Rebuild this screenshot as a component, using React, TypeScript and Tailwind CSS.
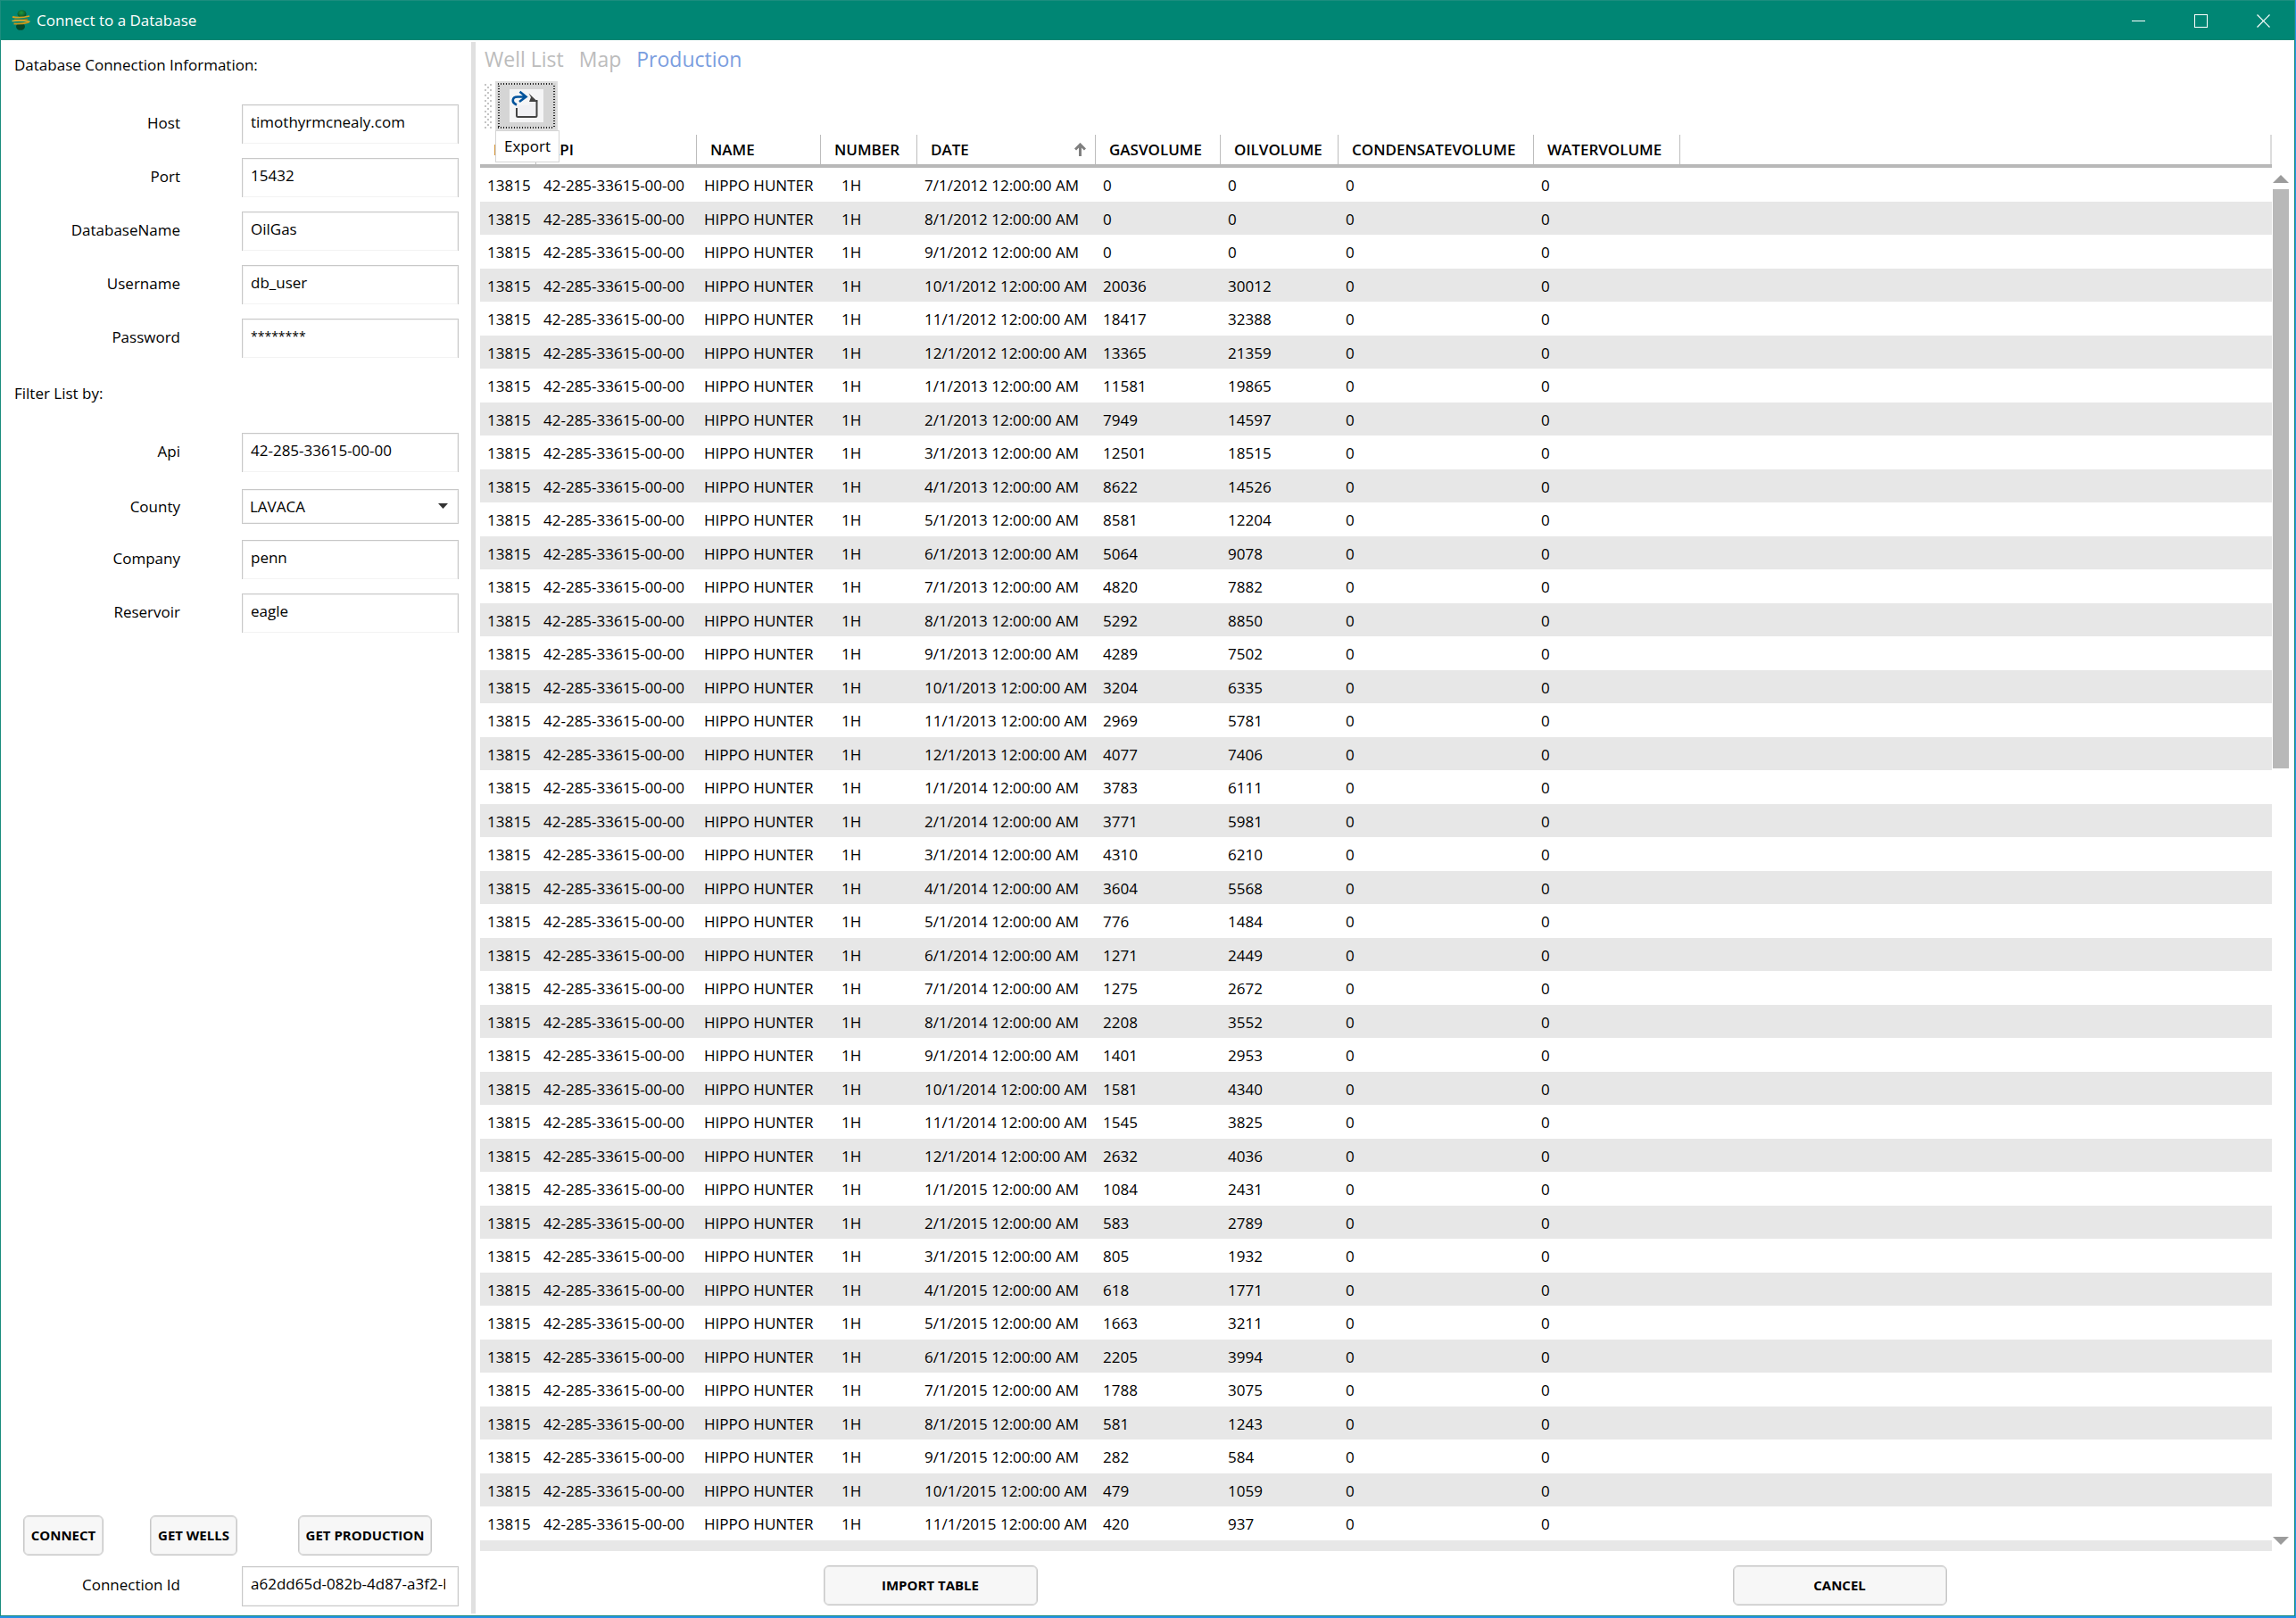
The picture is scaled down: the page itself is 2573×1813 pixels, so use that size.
import { useState } from 'react'

type Row = [date: string, gas: number, oil: number]

const rows: Row[] = [
  ['7/1/2012', 0, 0],
  ['8/1/2012', 0, 0],
  ['9/1/2012', 0, 0],
  ['10/1/2012', 20036, 30012],
  ['11/1/2012', 18417, 32388],
  ['12/1/2012', 13365, 21359],
  ['1/1/2013', 11581, 19865],
  ['2/1/2013', 7949, 14597],
  ['3/1/2013', 12501, 18515],
  ['4/1/2013', 8622, 14526],
  ['5/1/2013', 8581, 12204],
  ['6/1/2013', 5064, 9078],
  ['7/1/2013', 4820, 7882],
  ['8/1/2013', 5292, 8850],
  ['9/1/2013', 4289, 7502],
  ['10/1/2013', 3204, 6335],
  ['11/1/2013', 2969, 5781],
  ['12/1/2013', 4077, 7406],
  ['1/1/2014', 3783, 6111],
  ['2/1/2014', 3771, 5981],
  ['3/1/2014', 4310, 6210],
  ['4/1/2014', 3604, 5568],
  ['5/1/2014', 776, 1484],
  ['6/1/2014', 1271, 2449],
  ['7/1/2014', 1275, 2672],
  ['8/1/2014', 2208, 3552],
  ['9/1/2014', 1401, 2953],
  ['10/1/2014', 1581, 4340],
  ['11/1/2014', 1545, 3825],
  ['12/1/2014', 2632, 4036],
  ['1/1/2015', 1084, 2431],
  ['2/1/2015', 583, 2789],
  ['3/1/2015', 805, 1932],
  ['4/1/2015', 618, 1771],
  ['5/1/2015', 1663, 3211],
  ['6/1/2015', 2205, 3994],
  ['7/1/2015', 1788, 3075],
  ['8/1/2015', 581, 1243],
  ['9/1/2015', 282, 584],
  ['10/1/2015', 479, 1059],
  ['11/1/2015', 420, 937],
]

const headers = ['ID', 'API', 'NAME', 'NUMBER', 'DATE', 'GASVOLUME', 'OILVOLUME', 'CONDENSATEVOLUME', 'WATERVOLUME']

const tabs = ['Well List', 'Map', 'Production']

export default function App() {
  return (
    <div className="flex h-screen flex-col border-r border-b-2 border-[#2490e6] bg-white font-['Open_Sans',sans-serif] text-[17px] text-black">
      <div className="flex min-h-0 flex-1 flex-col border border-[#1b8d7e]">
        <TitleBar />
        <div className="flex min-h-0 flex-1">
          <ConnectionPanel />
          <div className="mt-0.5 mb-0.5 w-[5px] shrink-0 bg-[#e0e0e0]" />
          <ProductionPanel />
        </div>
      </div>
    </div>
  )
}

function TitleBar() {
  return (
    <header className="flex h-11 shrink-0 items-center bg-[#008674] pl-3 text-white">
      <AppLogo />
      <h1 className="ml-1.5">Connect to a Database</h1>
      <div className="ml-auto flex h-full">
        <button aria-label="Minimize" className="flex w-[70px] items-center justify-center">
          <svg width="15" height="15" viewBox="0 0 15 15" shapeRendering="crispEdges">
            <path d="M0 7.5h15" stroke="#fff" />
          </svg>
        </button>
        <button aria-label="Maximize" className="flex w-[70px] items-center justify-center">
          <svg width="15" height="15" viewBox="0 0 15 15" shapeRendering="crispEdges">
            <path d="M.5.5h14v14H.5z" fill="none" stroke="#fff" />
          </svg>
        </button>
        <button aria-label="Close" className="flex w-[70px] items-center justify-center">
          <svg width="15" height="15" viewBox="0 0 15 15">
            <path d="M.5.5l14 14M14.5.5l-14 14" stroke="#fff" strokeWidth="1.2" />
          </svg>
        </button>
      </div>
    </header>
  )
}

function AppLogo() {
  return (
    <svg width="22" height="24" viewBox="0 0 22 24">
      <defs>
        <radialGradient id="ball" cx="45%" cy="35%" r="65%">
          <stop offset="0" stopColor="#1f9a3c" />
          <stop offset="1" stopColor="#06492a" />
        </radialGradient>
      </defs>
      <ellipse cx="11.500" cy="4.500" rx="5" ry="4.300" fill="url(#ball)" />
      <ellipse cx="10" cy="18.800" rx="5" ry="4" fill="#06472a" />
      <path d="M1 8q9 1.500 19-1" fill="none" stroke="#d6a01c" strokeWidth="1.800" />
      <path d="M3 11.300q8 .8 15-.6" fill="none" stroke="#a87c12" strokeWidth="1.800" />
      <path d="M.5 12.500q9-1.500 20 .8" fill="none" stroke="#e2b33a" strokeWidth="1.500" />
      <path d="M2.500 15.500q9 .6 17-1.700" fill="none" stroke="#c8961a" strokeWidth="1.800" />
    </svg>
  )
}

interface FieldProps {
  id: string
  label: string
  value: string
  masked?: boolean
}

function Field({ id, label, value, masked }: FieldProps) {
  const [text, setText] = useState(value)

  return (
    <div className="flex h-11 items-start">
      <label htmlFor={id} className="w-[201px] pt-[9px] text-right leading-6">
        {label}
      </label>
      <input
        id={id}
        value={text}
        onChange={(e) => setText(e.target.value)}
        className={`ml-auto h-11 w-[243px] border border-b-0 border-[#c8c8c8] px-[9px] pb-1.5 leading-6 shadow-[inset_0_0_0_1px_#f3f3f3] outline-none ${masked ? 'text-sm' : ''}`}
      />
    </div>
  )
}

function ConnectionPanel() {
  const [county, setCounty] = useState('LAVACA')

  return (
    <aside className="flex w-[527px] shrink-0 flex-col pr-[14px] pb-[10px]">
      <h2 className="mt-4 ml-[15px] leading-6">Database Connection Information:</h2>
      <div className="mt-8 flex flex-col gap-4">
        <Field id="host" label="Host" value="timothyrmcnealy.com" />
        <Field id="port" label="Port" value="15432" />
        <Field id="database" label="DatabaseName" value="OilGas" />
        <Field id="username" label="Username" value="db_user" />
        <Field id="password" label="Password" value="********" masked />
      </div>

      <h2 className="mt-7 ml-[15px] leading-6">Filter List by:</h2>
      <div className="mt-8 flex flex-col">
        <Field id="api" label="Api" value="42-285-33615-00-00" />
        <div className="mt-[19px] flex h-[39px] items-center">
          <label htmlFor="county" className="w-[201px] text-right leading-6">
            County
          </label>
          <div className="relative ml-auto">
            <select
              id="county"
              value={county}
              onChange={(e) => setCounty(e.target.value)}
              className="block h-[39px] w-[243px] appearance-none border border-[#c8c8c8] bg-white pl-2 leading-6 shadow-[inset_0_0_0_1px_#f3f3f3] outline-none"
            >
              <option>LAVACA</option>
            </select>
            <svg className="pointer-events-none absolute top-4 right-3" width="11" height="6" viewBox="0 0 11 6">
              <path d="M0 0h11L5.500 6z" fill="#333" />
            </svg>
          </div>
        </div>
        <div className="mt-[18px] flex flex-col gap-4">
          <Field id="company" label="Company" value="penn" />
          <Field id="reservoir" label="Reservoir" value="eagle" />
        </div>
      </div>

      <div className="mt-auto flex pl-[25px]">
        <ActionButton className="w-[90px]">CONNECT</ActionButton>
        <ActionButton className="ml-[52px] w-[98px]">GET WELLS</ActionButton>
        <ActionButton className="ml-[68px] w-[150px]">GET PRODUCTION</ActionButton>
      </div>
      <div className="mt-3 flex h-[45px]">
        <label htmlFor="connection" className="w-[201px] pt-[9px] text-right leading-6">
          Connection Id
        </label>
        <input
          id="connection"
          readOnly
          value="a62dd65d-082b-4d87-a3f2-b"
          className="ml-auto h-[45px] w-[243px] border border-[#c8c8c8] pr-3.5 pb-1.5 pl-[9px] leading-6 shadow-[inset_0_0_0_1px_#f3f3f3] outline-none"
        />
      </div>
    </aside>
  )
}

function ActionButton({ children, className }: { children: string; className: string }) {
  return (
    <button
      className={`h-[45px] shrink-0 rounded-md border border-[#c8c8c8] bg-[#f7f7f7] text-[15px] font-bold whitespace-nowrap shadow-[inset_0_0_0_1px_#dedede] ${className}`}
    >
      {children}
    </button>
  )
}

function ProductionPanel() {
  const [active, setActive] = useState('Production')

  return (
    <main className="flex min-w-0 flex-1 flex-col">
      <nav className="flex h-[46px] shrink-0 gap-[17px] pt-[5px] pl-2.5 text-[23px] leading-8">
        {tabs.map((tab) => (
          <button
            key={tab}
            onClick={() => setActive(tab)}
            className={`h-8 ${tab === active ? 'text-[#7b9ee0]' : 'text-[#bcbcbc]'}`}
          >
            {tab}
          </button>
        ))}
      </nav>

      <div className="flex h-[60px] shrink-0 pl-2.5">
        <Grip />
        <div className="relative ml-1">
          <button
            aria-label="Export"
            className="flex h-[55px] w-[70px] items-center justify-center border-2 border-[#dedede] bg-[#d5d5d5]"
          >
            <ExportIcon />
          </button>
          <span
            role="tooltip"
            className="absolute top-[55px] left-0 flex h-9 w-[72px] items-center justify-center border border-[#d5d5d5] bg-white text-[17px]"
          >
            Export
          </span>
        </div>
      </div>

      <div className="flex min-h-0 flex-1 pl-[5px]">
        <div className="min-w-0 flex-1 overflow-hidden">
          <WellTable />
        </div>
        <ScrollBar />
      </div>

      <footer className="grid h-[72px] shrink-0 grid-cols-2 justify-items-center pt-4">
        <ActionButton className="w-60">IMPORT TABLE</ActionButton>
        <ActionButton className="w-60">CANCEL</ActionButton>
      </footer>
    </main>
  )
}

function Grip() {
  return (
    <svg className="mt-[3px]" width="8" height="51" viewBox="0 0 8 51" shapeRendering="crispEdges">
      <defs>
        <pattern id="grip" width="6" height="6" patternUnits="userSpaceOnUse">
          <path d="M0 0h2v2H0zM3 3h2v2H3z" fill="#c4c4c4" />
        </pattern>
      </defs>
      <rect width="8" height="51" fill="url(#grip)" />
    </svg>
  )
}

// page with an arrow curling into it, framed by the keyboard focus rectangle
function ExportIcon() {
  return (
    <svg width="66" height="51" viewBox="0 0 66 51">
      <path
        d="M1 1h63M1 50h63M2 3v46M64 3v46"
        fill="none"
        stroke="#222"
        strokeWidth="2"
        strokeDasharray="1 2"
        shapeRendering="crispEdges"
      />
      <g transform="translate(14 7)">
        <rect width="38" height="37" fill="#f5f5f6" />
        <path d="M8 18h14l1-6h8v18H8z" fill="#f0f0f3" />
        <path d="M8 21v8.500q0 1.500 1.500 1.500h19.500q1.500 0 1.500-1.500V12" fill="none" stroke="#424242" strokeWidth="2" />
        <path d="M21.500 4.500L31.500 14h-9.500l2-5z" fill="#424242" />
        <path d="M8 17.500C1.500 14.500 3 8.500 9 8.500h9M11.500 2.800l7 5.700-7.500 5.500" fill="none" stroke="#00539c" strokeWidth="2.600" />
      </g>
    </svg>
  )
}

function WellTable() {
  return (
    <table className="w-full table-fixed border-separate border-spacing-0 text-left whitespace-nowrap">
      <colgroup>
        <col className="w-[63px]" />
        <col className="w-[180px]" />
        <col className="w-[139px]" />
        <col className="w-[108px]" />
        <col className="w-[200px]" />
        <col className="w-[140px]" />
        <col className="w-[132px]" />
        <col className="w-[219px]" />
        <col className="w-[164px]" />
        <col />
      </colgroup>
      <thead>
        <tr className="h-[37px]">
          {headers.map((name) => (
            <th key={name} className="border-b-4 border-[#b8b8b8] p-0 font-semibold">
              <div className="flex h-[33px] items-center justify-between border-r border-[#bdbdbd] pr-2.5 pl-[15px]">
                {name}
                {name === 'DATE' && (
                  <svg width="13" height="15" viewBox="0 0 13 15">
                    <path d="M6.500 15V2M1 7.500l5.500-5.500 5.500 5.500" fill="none" stroke="#808080" strokeWidth="3" />
                  </svg>
                )}
              </div>
            </th>
          ))}
          <td className="border-b-4 border-[#b8b8b8] p-0">
            <div className="h-[33px] border-r-2 border-[#dcdcdc]" />
          </td>
        </tr>
      </thead>
      <tbody>
        {rows.map(([date, gas, oil]) => (
          <tr key={date} className="h-[38px] even:h-[37px] even:bg-[#e7e7e7]">
            <td className="p-0 pt-0.5 pl-2">13815</td>
            <td className="p-0 pt-0.5 pl-2">42-285-33615-00-00</td>
            <td className="p-0 pt-0.5 pl-2">HIPPO HUNTER</td>
            <td className="p-0 pt-0.5 pl-[23px]">1H</td>
            <td className="p-0 pt-0.5 pl-2">{date} 12:00:00 AM</td>
            <td className="p-0 pt-0.5 pl-2">{gas}</td>
            <td className="p-0 pt-0.5 pl-2">{oil}</td>
            <td className="p-0 pt-0.5 pl-2">0</td>
            <td className="p-0 pt-0.5 pl-2">0</td>
            <td />
          </tr>
        ))}
        <tr className="h-[37px] bg-[#e7e7e7]">
          <td colSpan={10} />
        </tr>
      </tbody>
    </table>
  )
}

function ScrollBar() {
  return (
    <div className="flex w-[25px] shrink-0 flex-col pt-[45px] pb-[7px] pl-px">
      <svg width="18" height="9" viewBox="0 0 18 9">
        <path d="M0 9L9 0l9 9z" fill="#9c9c9c" />
      </svg>
      <div className="mt-[7px] flex w-[18px] flex-1 flex-col">
        <div className="h-[43%] bg-[#b8b8b8]" />
      </div>
      <svg width="18" height="9" viewBox="0 0 18 9">
        <path d="M0 0h18L9 9z" fill="#9c9c9c" />
      </svg>
    </div>
  )
}
